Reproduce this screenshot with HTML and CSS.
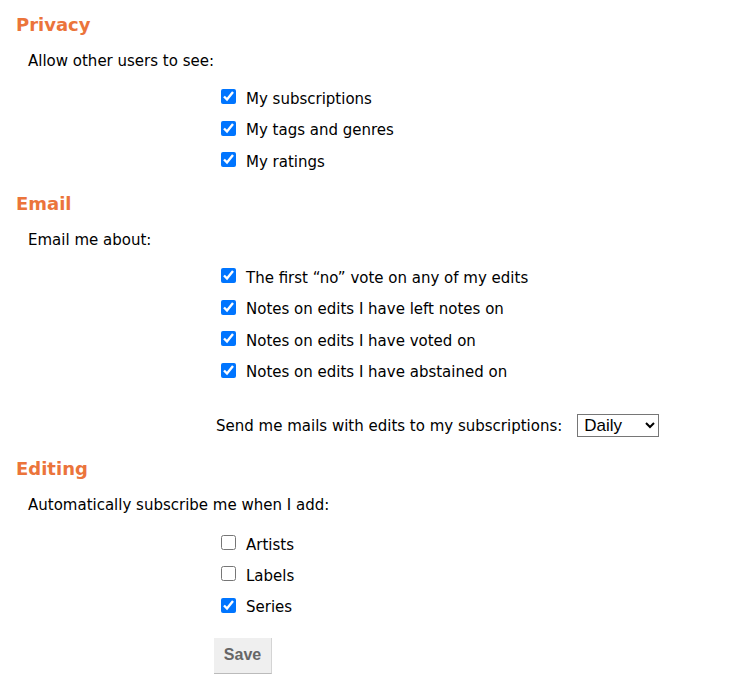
FILE: index.html
```html
<!DOCTYPE html>
<html>
<head>
<meta charset="utf-8">
<link rel="stylesheet" href="styles.css">
</head>
<body>
<form class="prefs">
  <h2 class="section-title first">Privacy</h2>
  <p class="intro">Allow other users to see:</p>
  <div class="checks">
    <label class="check-row"><input type="checkbox" checked><span>My subscriptions</span></label>
    <label class="check-row"><input type="checkbox" checked><span>My tags and genres</span></label>
    <label class="check-row"><input type="checkbox" checked><span>My ratings</span></label>
  </div>

  <h2 class="section-title">Email</h2>
  <p class="intro">Email me about:</p>
  <div class="checks">
    <label class="check-row"><input type="checkbox" checked><span>The first “no” vote on any of my edits</span></label>
    <label class="check-row"><input type="checkbox" checked><span>Notes on edits I have left notes on</span></label>
    <label class="check-row"><input type="checkbox" checked><span>Notes on edits I have voted on</span></label>
    <label class="check-row"><input type="checkbox" checked><span>Notes on edits I have abstained on</span></label>
  </div>
  <div class="select-row">
    <label class="select-label" for="freq">Send me mails with edits to my subscriptions:</label>
    <select id="freq" class="freq">
      <option>Daily</option>
      <option>Weekly</option>
      <option>Never</option>
    </select>
  </div>

  <h2 class="section-title">Editing</h2>
  <p class="intro">Automatically subscribe me when I add:</p>
  <div class="checks last">
    <label class="check-row"><input type="checkbox"><span>Artists</span></label>
    <label class="check-row"><input type="checkbox"><span>Labels</span></label>
    <label class="check-row"><input type="checkbox" checked><span>Series</span></label>
  </div>
  <div class="actions">
    <button type="button" class="save">Save</button>
  </div>
</form>
</body>
</html>
```

FILE: styles.css
```css
html, body {
  margin: 0;
  padding: 0;
  background: #fff;
}

body {
  font-family: "DejaVu Sans", Verdana, sans-serif;
  font-size: 15px;
  color: #000;
}

.prefs {
  padding: 14px 0 0 16px;
  display: flex;
  flex-direction: column;
}

.section-title {
  margin: 15.5px 0 0 0;
  font-size: 18px;
  line-height: 22px;
  font-weight: bold;
  color: #eb743b;
}

.section-title.first {
  margin-top: 0;
}

.intro {
  margin: 16px 0 0 12px;
  line-height: 18px;
}

.checks {
  margin-top: 13.3px;
  padding-left: 205px;
  display: flex;
  flex-direction: column;
}

.checks.last {
  margin-top: 14.4px;
}

.check-row {
  height: 31.4px;
  display: flex;
  align-items: center;
  gap: 10px;
}

.check-row input {
  width: 15px;
  height: 15px;
  margin: 0;
  position: relative;
  top: -2px;
}

.select-row {
  margin-top: 25px;
  height: 26px;
  padding-left: 200px;
  display: flex;
  align-items: center;
  gap: 15px;
}

.freq {
  width: 82px;
  height: 23px;
  font-family: "Liberation Sans", Arial, sans-serif;
  font-size: 17px;
  border: 1px solid #767676;
  border-radius: 0;
  background: #fff;
  color: #000;
  padding: 0 2px;
}

.select-row + .section-title {
  margin-top: 19.6px;
}

.actions {
  margin-top: 15px;
  padding-left: 198px;
  display: flex;
}

.save {
  width: 58px;
  height: 36px;
  font-family: "Liberation Sans", Arial, sans-serif;
  font-size: 16px;
  font-weight: bold;
  color: #666;
  background: #efefef;
  border: none;
  border-right: 1px solid #d4d4d4;
  border-bottom: 1px solid #bbb;
  padding: 0;
}
```
